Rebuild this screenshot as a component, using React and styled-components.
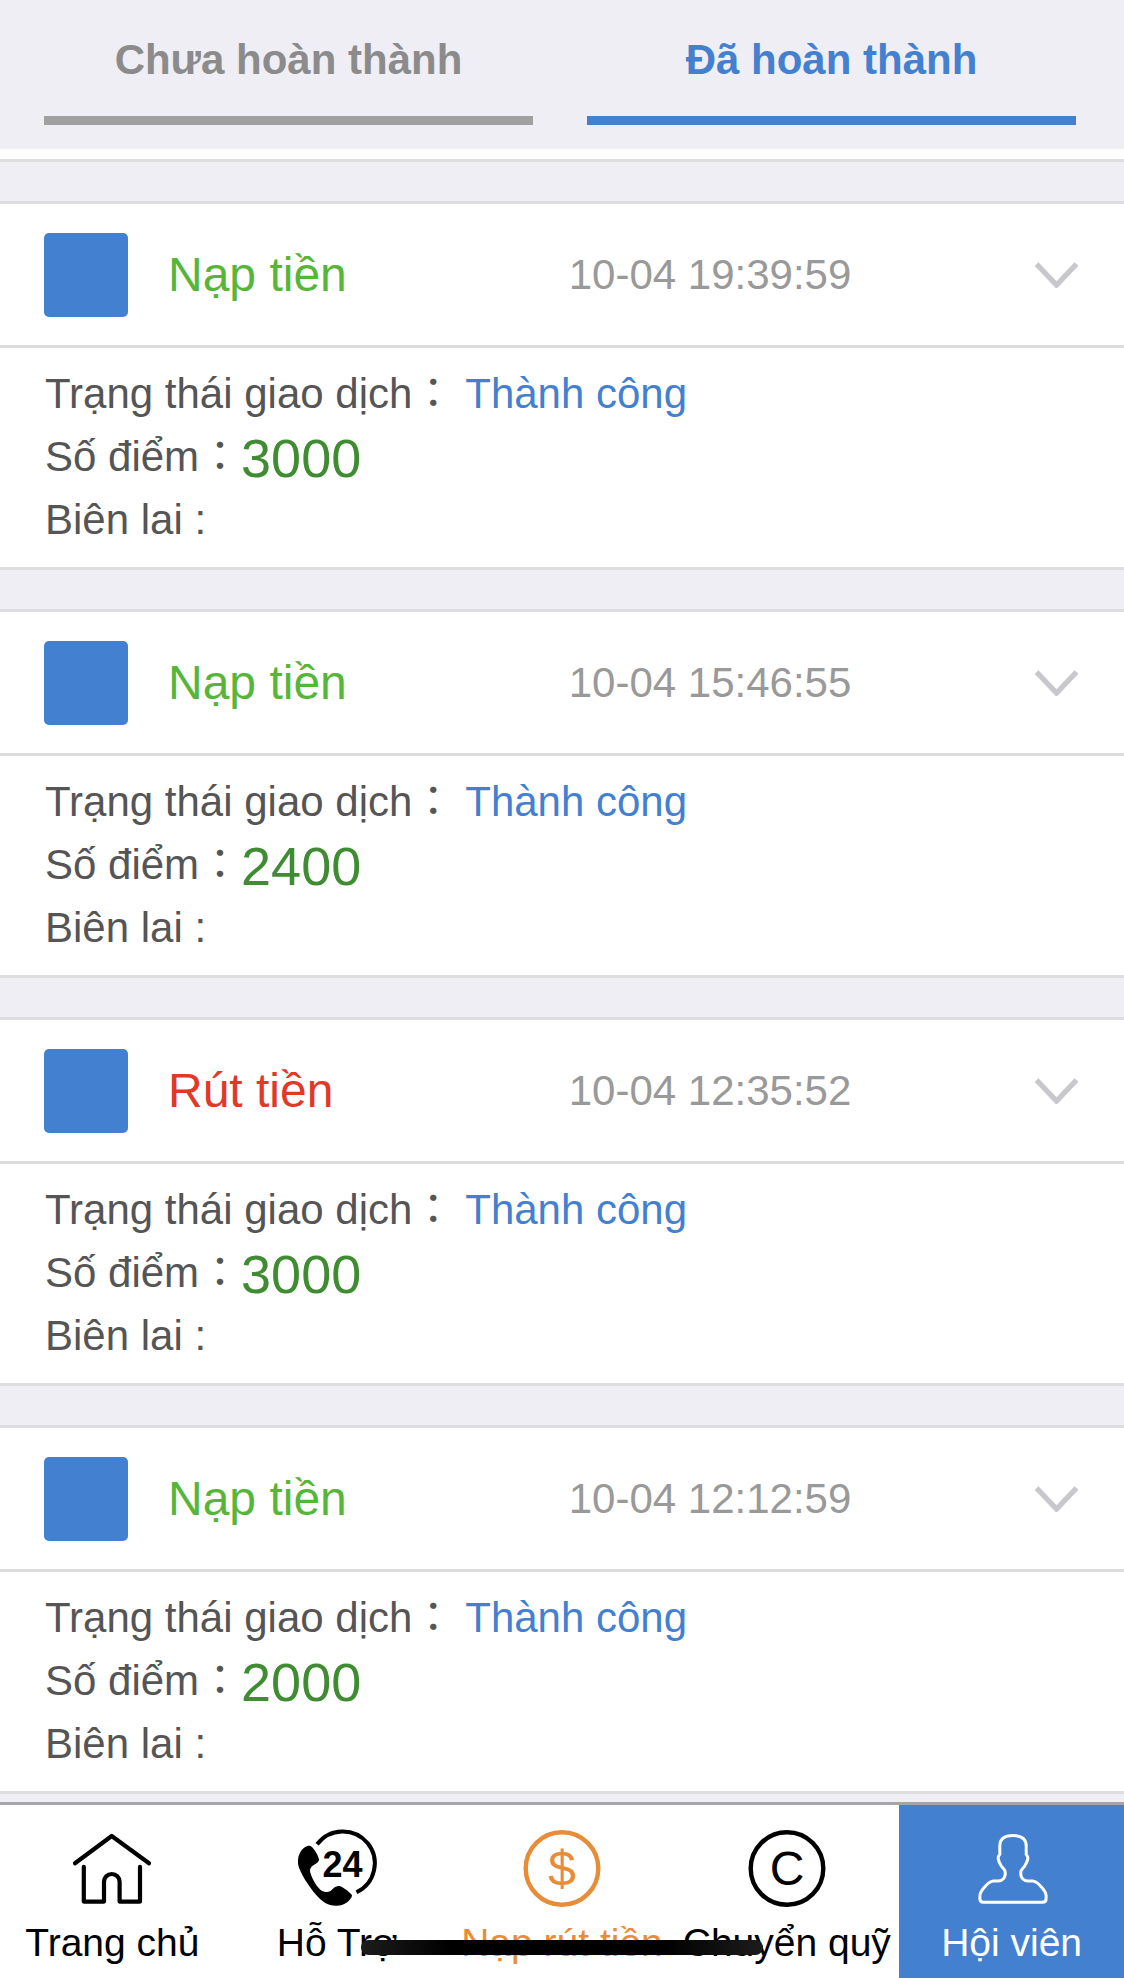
import { useState } from "react";
import styled, { createGlobalStyle } from "styled-components";

const GlobalStyle = createGlobalStyle`
  * {
    box-sizing: border-box;
  }

  body {
    margin: 0;
    background: #efeef5;
    color: #555;
    font-family: "Liberation Sans", "Noto Sans CJK TC", sans-serif;
    font-size: 42px;
    line-height: 63px;
  }

  button {
    border: none;
    background: none;
    font: inherit;
    cursor: pointer;
  }
`;

const Page = styled.div`
  display: flex;
  flex-direction: column;
  min-height: 100vh;
`;

const Tabs = styled.div`
  display: flex;
  gap: 54px;
  padding: 0 48px 24px 44px;
  border-bottom: 10px solid #fff;
`;

const Tab = styled.button`
  flex: 1;
  padding: 28px 0 25px;
  border-bottom: 9px solid ${(props) => (props.$active ? "#4480d0" : "#a0a0a0")};
  color: ${(props) => (props.$active ? "#4480d0" : "#8b8b8b")};
  font-weight: bold;
`;

const List = styled.main`
  display: flex;
  flex-direction: column;
  gap: 39px;
  padding: 39px 0 8px;
  border-top: 3px solid #dddddf;
`;

const Card = styled.section`
  border-top: 3px solid #dddddf;
  border-bottom: 3px solid #dddddf;
  background: #fff;
`;

const CardHeader = styled.button`
  display: grid;
  grid-template-columns: 84px 11fr 13fr 44px;
  column-gap: 40px;
  align-items: center;
  width: 100%;
  padding: 29px 45px 28px 44px;
  text-align: left;
`;

const Square = styled.span`
  height: 84px;
  border-radius: 5px;
  background: #4480d0;
`;

const HeaderText = styled.span`
  padding-bottom: 2px;
`;

const Title = styled(HeaderText)`
  color: ${(props) => (props.$type === "withdraw" ? "#e13828" : "#57b638")};
  font-size: 48px;
`;

const Time = styled(HeaderText)`
  color: #999;
`;

const CardBody = styled.div`
  padding: 14px 45px 16px;
  border-top: 3px solid #dddddf;
`;

const Line = styled.p`
  height: 63px;
  margin: 0;
`;

const Status = styled.span`
  color: #4480d0;
`;

const Points = styled.span`
  color: #3f8c32;
  font-size: 54px;
  line-height: 54px;
  vertical-align: -6px;
`;

const NavBar = styled.nav`
  position: sticky;
  bottom: 0;
  display: flex;
  margin-top: auto;
  border-top: 3px solid #a6a6aa;
  background: #fff;
`;

const NavItem = styled.a`
  flex: 1 1 0;
  display: flex;
  flex-direction: column;
  align-items: center;
  gap: 10px;
  min-width: 0;
  padding: 25px 0 10px;
  background: ${(props) => (props.$active ? "#4480d0" : "#fff")};
  color: ${(props) => props.$color};
  font-size: 39px;
  line-height: 50px;
  text-decoration: none;
  white-space: nowrap;

  svg {
    display: block;
    width: 78px;
    height: 78px;
    overflow: visible;
  }
`;

const HomeIndicator = styled.div`
  position: absolute;
  bottom: 23px;
  left: 50%;
  width: 402px;
  height: 15px;
  border-radius: 8px;
  background: linear-gradient(90deg, #1c1c1c, #000 22%, #000 75%, #1c1c1c);
  transform: translateX(-50%);
`;

function ChevronIcon() {
  return (
    <svg width="44" height="26" viewBox="0 0 44 26" fill="none" aria-hidden="true">
      <path d="M1.5 2 L21.5 23 L41.5 2" stroke="#c7c7cc" strokeWidth="5.4" />
    </svg>
  );
}

function HomeIcon() {
  return (
    <svg
      viewBox="0 0 78 78"
      fill="none"
      stroke="currentColor"
      strokeWidth="4.2"
      strokeLinecap="round"
      strokeLinejoin="round"
      aria-hidden="true"
    >
      <path d="M2 33.3 L38.7 6 L76 33.3" />
      <path d="M10.8 36.9 V71.6 H31 V51.8 A7.8 7.8 0 0 1 46.6 51.8 V71.6 H67 V36.9" />
    </svg>
  );
}

function SupportIcon() {
  return (
    <svg viewBox="0 0 78 78" fill="none" aria-hidden="true">
      <path d="M19.1 14.3 A32 32 0 1 1 58.5 62.3" stroke="currentColor" strokeWidth="4" />
      <path
        d="M12.5 16 C15 17 20 24.5 21 29.3 C21 31 20 32.3 18.5 33.3 C16 35 13.5 36 12.5 38.3 C11.8 40 12 41.8 12.5 43.3 C14 48.5 17.5 55 21.8 59.3 C23.8 61.3 25.8 62 27.8 62 C29.5 62 31 61.8 32.5 61 C34.3 60 35.2 58.3 36.8 57.3 C38.3 56.3 40 55.6 41.8 56 C44 56.5 52.5 62.5 54 65.3 C54 67.5 51 71.2 48.5 72.7 C45.5 74.6 42.3 75.7 39 75.7 C34.5 75.9 30.5 75 26.8 72.7 C21 68.8 15.8 62.5 11.8 56.7 C8.5 52 5.5 47.8 3.5 43.3 C2 40 0.2 36.8 0 33.3 C-0.1 29.8 0.2 26.3 1.8 23.3 C3 20.8 4.6 18.7 6.8 17.3 C8.5 16.2 10.8 15.5 12.5 16 Z"
        fill="currentColor"
      />
      <text x="44.5" y="47" textAnchor="middle" fontSize="36" fontWeight="bold" fill="currentColor">
        24
      </text>
    </svg>
  );
}

function CoinIcon({ symbol, size, baseline }) {
  return (
    <svg viewBox="0 0 78 78" fill="none" aria-hidden="true">
      <circle cx="39" cy="38.5" r="36.3" stroke="currentColor" strokeWidth="4.4" />
      <text x="39" y={baseline} textAnchor="middle" fontSize={size} fill="currentColor">
        {symbol}
      </text>
    </svg>
  );
}

function MemberIcon() {
  return (
    <svg viewBox="0 0 78 78" fill="none" stroke="currentColor" strokeWidth="3" aria-hidden="true">
      <path
        d="M40 5.5 C31 5.5 26.8 9.5 26.8 16 V24.5 C25.3 26 24.9 27.5 25.3 29.5 C26 32 27 34 28.3 36 C29.5 38 32.2 39.5 32.2 42 V45 C31.5 48.5 29.5 50.8 25 51.1 H19.7 C16.5 51.8 13.5 54.5 11.4 57.3 C9 60 7 62.5 6.9 65.5 V69 C6.9 71.2 8.4 72.2 10.3 72.2 H69.7 C71.6 72.2 73.1 71.2 73.1 69 V65.5 C73 62.5 71 60 68.6 57.3 C66.5 54.5 63.5 51.8 60.3 51.1 H55 C50.5 50.8 48.5 48.5 47.8 45 V42 C47.8 39.5 50.5 38 51.7 36 C53 34 54 32 54.7 29.5 C55.1 27.5 54.7 26 53.2 24.5 V16 C53.2 9.5 49 5.5 40 5.5 Z"
        strokeLinejoin="round"
      />
    </svg>
  );
}

const transactions = [
  { type: "deposit", title: "Nạp tiền", time: "10-04 19:39:59", points: 3000 },
  { type: "deposit", title: "Nạp tiền", time: "10-04 15:46:55", points: 2400 },
  { type: "withdraw", title: "Rút tiền", time: "10-04 12:35:52", points: 3000 },
  { type: "deposit", title: "Nạp tiền", time: "10-04 12:12:59", points: 2000 },
];

function TransactionCard({ type, title, time, points }) {
  const [open, setOpen] = useState(true);

  return (
    <Card>
      <CardHeader type="button" aria-expanded={open} onClick={() => setOpen(!open)}>
        <Square />
        <Title $type={type}>{title}</Title>
        <Time>{time}</Time>
        <ChevronIcon />
      </CardHeader>
      {open && (
        <CardBody>
          <Line>
            Trạng thái giao dịch： <Status>Thành công</Status>
          </Line>
          <Line>
            Số điểm：<Points>{points}</Points>
          </Line>
          <Line>Biên lai :</Line>
        </CardBody>
      )}
    </Card>
  );
}

export default function App() {
  const [tab, setTab] = useState("done");

  return (
    <Page>
      <GlobalStyle />
      <Tabs role="tablist">
        <Tab
          type="button"
          role="tab"
          aria-selected={tab === "pending"}
          $active={tab === "pending"}
          onClick={() => setTab("pending")}
        >
          Chưa hoàn thành
        </Tab>
        <Tab
          type="button"
          role="tab"
          aria-selected={tab === "done"}
          $active={tab === "done"}
          onClick={() => setTab("done")}
        >
          Đã hoàn thành
        </Tab>
      </Tabs>

      <List>
        {transactions.map((item) => (
          <TransactionCard key={item.time} {...item} />
        ))}
      </List>

      <NavBar>
        <NavItem href="#home" $color="#000">
          <HomeIcon />
          Trang chủ
        </NavItem>
        <NavItem href="#support" $color="#000">
          <SupportIcon />
          Hỗ Trợ
        </NavItem>
        <NavItem href="#cashier" $color="#e98c38">
          <CoinIcon symbol="$" size={50} baseline={56} />
          Nạp rút tiền
        </NavItem>
        <NavItem href="#transfer" $color="#000">
          <CoinIcon symbol="C" size={48} baseline={55} />
          Chuyển quỹ
        </NavItem>
        <NavItem href="#member" $color="#fff" $active>
          <MemberIcon />
          Hội viên
        </NavItem>
        <HomeIndicator />
      </NavBar>
    </Page>
  );
}
